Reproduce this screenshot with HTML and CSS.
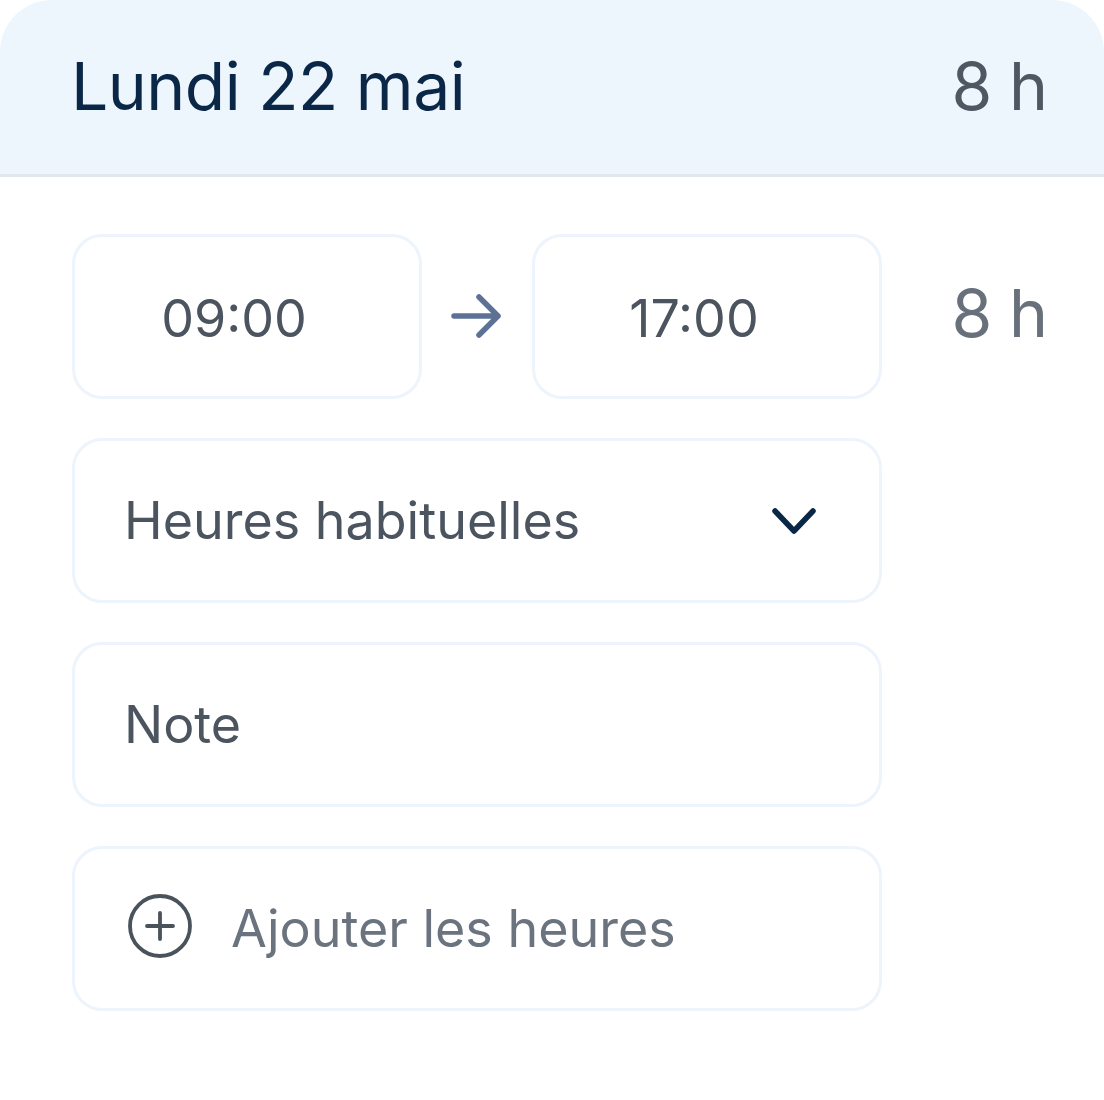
FILE: index.html
```html
<!DOCTYPE html>
<html>
<head>
 <title>Lundi 22 mai</title>
 <link rel="stylesheet" href="styles.css">
</head>
<body>
<div class="day_card">
	<div class="day_header">
		<span class="day_title">Lundi 22 mai</span>
		<span class="day_total">8 h</span>
	</div>
	<div class="day_body">
		<div class="time_row">
			<div class="field time_field">09:00</div>
			<div class="time_arrow">
				<svg width="54" height="54" viewBox="0 0 54 54">
					<path d="M4 27 H48 M29 8 L48 27 L29 46" fill="none" stroke="#5d7196" stroke-width="5.5" stroke-linecap="round" stroke-linejoin="round"/>
				</svg>
			</div>
			<div class="field time_field">17:00</div>
			<span class="row_total">8 h</span>
		</div>
		<div class="field wide_field select_field">
			<span>Heures habituelles</span>
			<svg width="46" height="30" viewBox="0 0 46 30">
				<path d="M4 5 L23 25 L42 5" fill="none" stroke="#0b2747" stroke-width="5.5" stroke-linecap="round" stroke-linejoin="round"/>
			</svg>
		</div>
		<div class="field wide_field">Note</div>
		<div class="field wide_field add_field">
			<svg width="66" height="66" viewBox="0 0 66 66">
				<circle cx="33" cy="33" r="30" fill="none" stroke="#4a525c" stroke-width="3.8"/>
				<path d="M33 20 V46 M20 33 H46" fill="none" stroke="#4a525c" stroke-width="3.8" stroke-linecap="round"/>
			</svg>
			<span>Ajouter les heures</span>
		</div>
	</div>
</div>
</body>
</html>
```

FILE: styles.css
```css
	html, body {
		margin: 0;
		padding: 0;
		background: #ffffff;
	}

	* {
		box-sizing: border-box;
	}

	.day_card {
		width: 1104px;
		height: 1100px;
		font-family: Inter, "Noto Sans", sans-serif;
		color: #4b545f;
	}

	.day_header {
		height: 177px;
		display: flex;
		align-items: center;
		justify-content: space-between;
		padding: 0 57px 0 71px;
		background: #eef6fd;
		border-bottom: 3px solid #e2e7ec;
		border-radius: 52px 52px 0 0;
	}

	.day_title {
		font-size: 66px;
		color: #0b2747;
		letter-spacing: -0.5px;
		margin-top: -2px;
	}

	.day_total {
		font-size: 66px;
		color: #4f5862;
		letter-spacing: -1px;
		margin-top: -2px;
	}

	.day_body {
		display: flex;
		flex-direction: column;
		gap: 39px;
		padding: 57px 57px 0 72px;
	}

	.field {
		height: 165px;
		border: 3.5px solid #edf4fc;
		border-radius: 30px;
		background: #ffffff;
		display: flex;
		align-items: center;
		font-size: 52px;
		color: #4b545f;
	}

	.time_row {
		display: flex;
		align-items: center;
	}

	.time_field {
		width: 350px;
		justify-content: center;
		padding-right: 26px;
		padding-top: 4px;
	}

	.time_arrow {
		width: 110px;
		display: flex;
		justify-content: center;
		margin-top: -2px;
	}

	.row_total {
		margin-left: auto;
		font-size: 66px;
		color: #67707b;
		letter-spacing: -1px;
		margin-top: -8px;
	}

	.wide_field {
		width: 810px;
		padding-left: 49px;
	}

	.select_field {
		justify-content: space-between;
		padding-right: 62px;
	}

	.add_field {
		padding-left: 52px;
		gap: 38px;
	}

	.add_field svg {
		margin-top: -6px;
	}

	.add_field span {
		color: #6a737e;
	}
```
